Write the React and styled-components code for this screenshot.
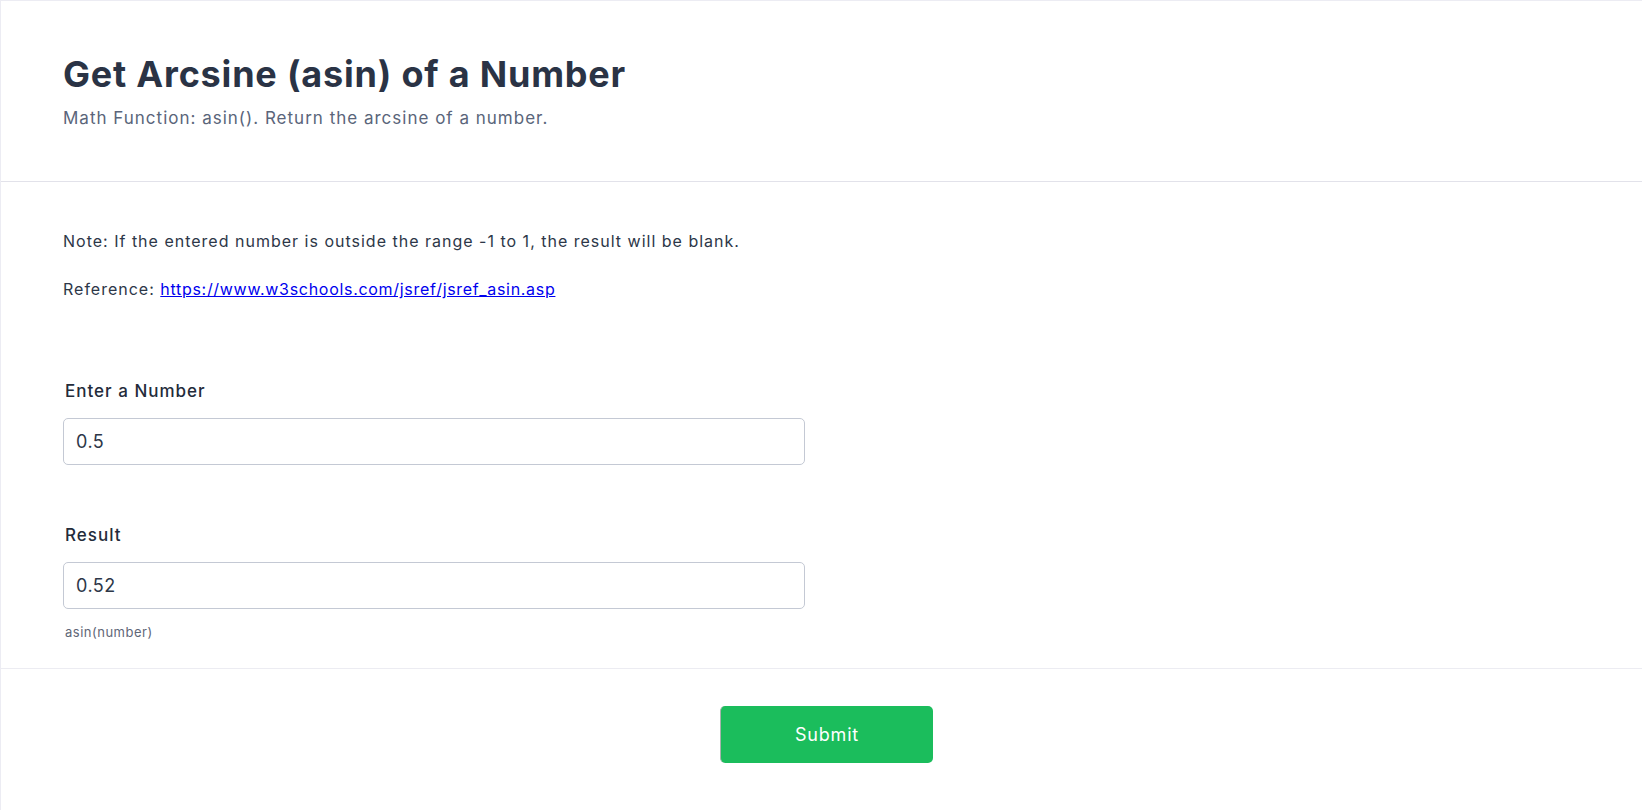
import React from "react";
import styled, { createGlobalStyle } from "styled-components";

const GlobalStyle = createGlobalStyle`
  body {
    margin: 0;
    background: #ffffff;
    font-family: Inter, "Noto Sans", sans-serif;
    color: #2d3748;
  }
`;

const Card = styled.div`
  box-sizing: border-box;
  min-height: 100vh;
  border: 1px solid #ececf3;
  border-right: none;
  border-bottom: none;
  background: #fff;
`;

const Header = styled.div`
  padding: 53px 62px 49px;
  border-bottom: 1px solid #e2e2ea;
`;

const Title = styled.h1`
  margin: 0;
  font-size: 36px;
  line-height: 40px;
  font-weight: 700;
  color: #2a3345;
  letter-spacing: 0.8px;
`;

const Subtitle = styled.p`
  margin: 10px 0 0;
  font-size: 17px;
  line-height: 28px;
  color: #5a657a;
  letter-spacing: 1px;
`;

const Body = styled.div`
  padding: 47px 62px 27px;
  border-bottom: 1px solid #ececf2;
`;

const Text = styled.p`
  margin: 0 0 24px;
  font-size: 16px;
  line-height: 24px;
  color: #2d3748;
  letter-spacing: 1px;
`;

const Link = styled.a`
  color: #0000ee;
  text-decoration: underline;
  letter-spacing: 0.7px;
`;

const Field = styled.div`
  display: flex;
  flex-direction: column;
  max-width: 742px;
  margin-top: ${(p) => p.$top}px;
`;

const Label = styled.label`
  margin-left: 2px;
  font-size: 17px;
  line-height: 24px;
  font-weight: 500;
  color: #232b3a;
  letter-spacing: 1px;
`;

const Input = styled.input`
  margin-top: 15px;
  box-sizing: border-box;
  height: 47px;
  padding: 0 12px;
  border: 1px solid #c4c9d4;
  border-radius: 5px;
  font-family: Inter, sans-serif;
  font-size: 18px;
  letter-spacing: 0.5px;
  color: #2d3748;
  outline: none;
`;

const Hint = styled.span`
  margin-top: 14px;
  margin-left: 2px;
  font-size: 13px;
  line-height: 18px;
  color: #5f6778;
  letter-spacing: 0.5px;
`;

const Footer = styled.div`
  display: flex;
  justify-content: center;
  padding: 37px 0 48px;
`;

const SubmitButton = styled.button`
  width: 213px;
  height: 57px;
  margin-left: 10px;
  border: none;
  border-left: 1px solid #a8b3ad;
  border-radius: 5px;
  background: #1bbd5c;
  color: #fff;
  font-family: Inter, sans-serif;
  font-size: 18px;
  font-weight: 400;
  letter-spacing: 0.8px;
  cursor: pointer;
`;

export default function App() {
  return (
    <>
      <GlobalStyle />
      <Card>
        <Header>
          <Title>Get Arcsine (asin) of a Number</Title>
          <Subtitle>Math Function: asin(). Return the arcsine of a number.</Subtitle>
        </Header>
        <Body>
          <Text>
            Note: If the entered number is outside the range -1 to 1, the result will be blank.
          </Text>
          <Text>
            Reference:{" "}
            <Link href="#">https://www.w3schools.com/jsref/jsref_asin.asp</Link>
          </Text>
          <Field $top={78}>
            <Label>Enter a Number</Label>
            <Input defaultValue="0.5" />
          </Field>
          <Field $top={58}>
            <Label>Result</Label>
            <Input defaultValue="0.52" readOnly />
            <Hint>asin(number)</Hint>
          </Field>
        </Body>
        <Footer>
          <SubmitButton>Submit</SubmitButton>
        </Footer>
      </Card>
    </>
  );
}
